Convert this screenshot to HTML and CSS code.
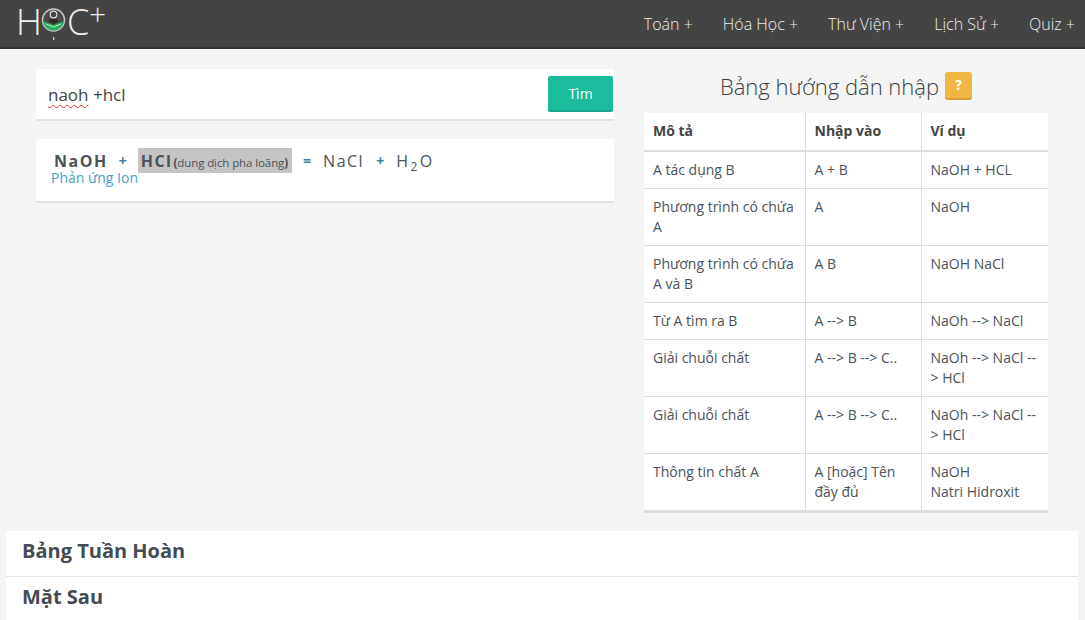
FILE: index.html
```html
<!DOCTYPE html>
<html lang="vi">
<head>
<meta charset="utf-8">
<title>Học+</title>
<link rel="stylesheet" href="styles.css">
</head>
<body>
<header class="nav">
  <div class="logo">
    <span class="logo-h">H</span>
    <svg class="logo-o" width="26" height="34" viewBox="0 0 26 34">
      <defs><clipPath id="disc"><circle cx="12.5" cy="13" r="10.5"/></clipPath></defs>
      <circle cx="12.5" cy="13" r="11" fill="#4a4a4a" stroke="#c9c9c9" stroke-width="1.4"/>
      <g clip-path="url(#disc)">
        <path d="M1 14 L12.5 18 L24 14 V25 H1 Z" fill="#27ae60"/>
        <path d="M5 17 L12.5 20 L20 17" fill="none" stroke="#b9e6c9" stroke-width="1"/>
        <path d="M7 14 Q12.5 9.5 18 14 L12.5 17 Z" fill="#2b2b2b"/>
      </g>
      <circle cx="12.5" cy="7.500" r="3.300" fill="#444" stroke="#ddd" stroke-width="1.200"/>
      <rect x="12" y="30" width="1.300" height="3" fill="#ccc"/>
    </svg>
    <span class="logo-c">C</span>
    <span class="logo-plus">+</span>
  </div>
  <nav class="menu">
    <a>Toán +</a>
    <a>Hóa Học +</a>
    <a>Thư Viện +</a>
    <a>Lịch Sử +</a>
    <a>Quiz +</a>
  </nav>
</header>

<main class="top">
  <section class="left">
    <div class="search">
      <div class="query"><span class="typo">naoh</span> +hcl</div>
      <button class="find">Tìm</button>
    </div>
    <div class="result">
      <div class="equation">
        <b class="chem">NaOH</b>
        <span class="op">+</span>
        <span class="mark"><b class="chem chem-tight">HCl</b><span class="note"><b>(</b>dung dịch pha loãng<b>)</b></span></span>
        <span class="op">=</span>
        <span class="prod">NaCl</span>
        <span class="op">+</span>
        <span class="prod">H<sub>2</sub>O</span>
      </div>
      <a class="ion">Phản ứng Ion</a>
    </div>
  </section>

  <section class="right">
    <h2 class="guide-title">Bảng hướng dẫn nhập <span class="help">?</span></h2>
    <table class="guide">
      <colgroup><col class="c1"><col class="c2"><col class="c3"></colgroup>
      <thead>
        <tr><th>Mô tả</th><th>Nhập vào</th><th>Ví dụ</th></tr>
      </thead>
      <tbody>
        <tr><td>A tác dụng B</td><td>A + B</td><td>NaOH + HCL</td></tr>
        <tr><td>Phương trình có chứa A</td><td>A</td><td>NaOH</td></tr>
        <tr><td>Phương trình có chứa A và B</td><td>A B</td><td>NaOH NaCl</td></tr>
        <tr><td>Từ A tìm ra B</td><td>A --&gt; B</td><td>NaOh --&gt; NaCl</td></tr>
        <tr><td>Giải chuỗi chất</td><td>A --&gt; B --&gt; C..</td><td>NaOh --&gt; NaCl --&gt; HCl</td></tr>
        <tr><td>Giải chuỗi chất</td><td>A --&gt; B --&gt; C..</td><td>NaOh --&gt; NaCl --&gt; HCl</td></tr>
        <tr><td>Thông tin chất A</td><td>A [hoặc] Tên đầy đủ</td><td>NaOH<br>Natri Hidroxit</td></tr>
      </tbody>
    </table>
  </section>
</main>

<section class="panels">
  <h3 class="panel">Bảng Tuần Hoàn</h3>
  <h3 class="panel">Mặt Sau</h3>
</section>
</body>
</html>
```
FILE: styles.css
```css
* { box-sizing: border-box; }
html, body { margin: 0; height: 620px; overflow: hidden; }
body {
  background: #f5f5f5;
  color: #3d4449;
  font-family: "Open Sans", "Noto Sans", sans-serif;
  font-size: 14px;
}

.nav {
  height: 49px;
  background: #444;
  border-bottom: 2px solid #333;
  display: flex;
  justify-content: space-between;
  align-items: center;
  padding: 0 10px 0 16px;
}
.logo { display: flex; align-items: flex-start; height: 47px; color: #f0f0f0; font-weight: 300; }
.logo-h, .logo-c { font-size: 36px; line-height: 36px; margin-top: 4px; }
.logo-h { width: 24px; }
.logo-o { margin: 7px 0 0 1px; }
.logo-c { width: 24px; margin-left: 0; }
.logo-plus { font-size: 30px; line-height: 30px; margin: -1px 0 0 -2px; }

.menu { display: flex; gap: 30px; }
.menu a { color: #eee; font-size: 16px; font-weight: 300; line-height: 44px; }

.top {
  display: flex;
  align-items: flex-start;
  gap: 30px;
  padding: 20px 37px 0 36px;
  height: 482px;
}
.left { width: 578px; display: flex; flex-direction: column; gap: 18px; }
.right { width: 404px; }

.search {
  height: 52px;
  background: #fff;
  border-bottom: 2px solid #e2e4e4;
  display: flex;
  align-items: center;
  justify-content: space-between;
  padding: 0 1px 0 12px;
}
.query { font-size: 17px; color: #444; }
.typo { text-decoration: underline wavy #d33 1px; text-underline-offset: 3px; }
.find {
  width: 65px;
  height: 36px;
  margin-top: 0;
  background: #1abc9c;
  border: 0;
  border-bottom: 2px solid #17a689;
  border-radius: 2px;
  color: #fff;
  font: 14px "Open Sans", sans-serif;
}

.result {
  height: 64px;
  background: #fff;
  border-bottom: 2px solid #e2e4e4;
  padding: 9px 15px 0;
}
.equation { display: flex; align-items: center; height: 25px; font-size: 16px; color: #4b5258; }
.chem { font-weight: 700; letter-spacing: 1.500px; margin-left: 3px; }
.chem-tight { margin-left: 0; }
.op { color: #3f7ea6; font-weight: 700; font-size: 14px; margin: 0 11px; }
.mark { display: flex; align-items: center; height: 25px; background: #c4c4c4; padding: 0 4px 0 3px; }
.note { font-size: 11.500px; margin: 4px 0 0 1px; letter-spacing: -0.100px; }
.prod { letter-spacing: 1.500px; margin: 0 1px; font-weight: 400; }
sub { font-size: 12px; line-height: 0; margin: 0 1px; }
.ion { display: block; color: #4a9fc7; font-size: 14px; line-height: 16px; margin-top: -3px; }

.guide-title {
  margin: 0 0 11px;
  height: 33px;
  display: flex;
  justify-content: center;
  align-items: center;
  gap: 6px;
  font-size: 22px;
  font-weight: 300;
  color: #3a3f44;
}
.help {
  width: 27px;
  height: 28px;
  background: #f2b644;
  border-bottom: 2px solid #d99e2f;
  border-radius: 3px;
  color: #fff;
  font-size: 14px;
  font-weight: 700;
  text-align: center;
  line-height: 26px;
}

.guide {
  width: 404px;
  table-layout: fixed;
  border-collapse: collapse;
  background: #fff;
  border-bottom: 3px solid #ddd;
  line-height: 20px;
  color: #4b5258;
}
.c1 { width: 161px; }
.c2 { width: 116px; }
.c3 { width: 127px; }
.guide th, .guide td {
  padding: 8px 8px 8px 9px;
  text-align: left;
  vertical-align: top;
  border-right: 1px solid #ddd;
  border-bottom: 1px solid #ddd;
}
.guide th { font-weight: 700; padding-top: 8px; padding-bottom: 9px; border-bottom-width: 2px; color: #444; }
.guide th:last-child, .guide td:last-child { border-right: 0; }
.guide tr:first-child td { padding-top: 8px; }
.guide tbody tr:last-child td { border-bottom: 0; }

.panels { margin: 0 7px 0 6px; background: #fff; }
.panel {
  margin: 0;
  height: 46px;
  padding: 6px 16px 0;
  background: #fff;
  border-bottom: 1px solid #e6e6e6;
  font-size: 20px;
  line-height: 28px;
  font-weight: 700;
  color: #444b52;
}
```
